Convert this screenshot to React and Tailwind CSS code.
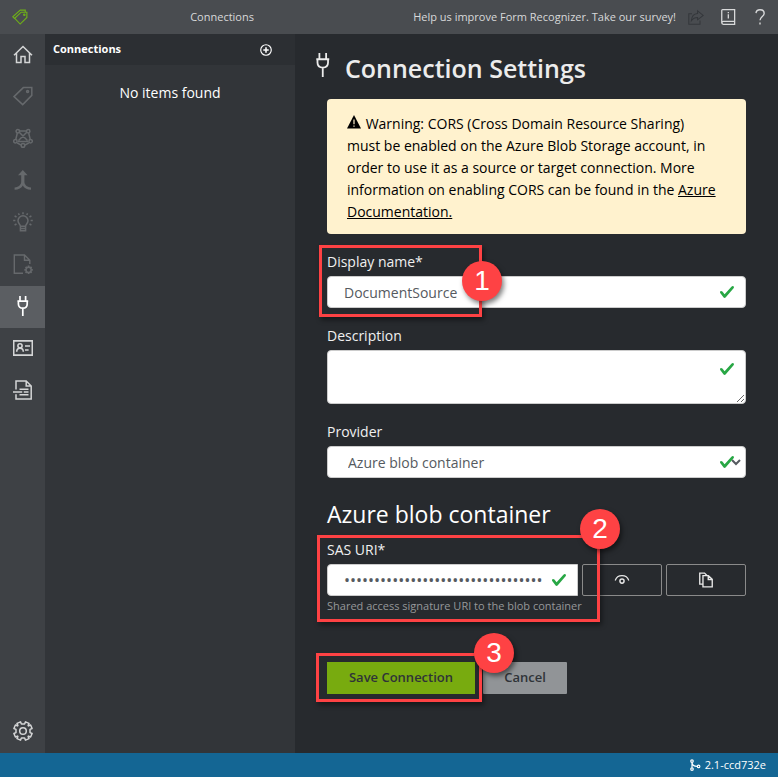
import { useState } from "react";

function Icon({ size = 20, stroke = 1.3, className = "", children }) {
  return (
    <svg
      aria-hidden="true"
      width={size}
      height={size}
      viewBox="0 0 20 20"
      fill="none"
      stroke="currentColor"
      strokeWidth={stroke}
      className={"block shrink-0 " + className}
    >
      {children}
    </svg>
  );
}

const TagsIcon = () => (
  <Icon size={16} stroke={1.4}>
    <path d="M3.6 12.2 1 9.8 10.3 1.4H16.6V3.6" />
    <path d="M3.4 11.6 11.5 4H18.6V10.6L10.2 18.8Z" />
    <circle cx="15.4" cy="7.2" r="0.9" />
  </Icon>
);

const HomeIcon = () => (
  <Icon stroke={1.5}>
    <path d="M1 11.2 10 2.5 19 11.2M3.5 9.2V18.5H8V12.5H12V18.5H16.5V9.2" />
  </Icon>
);

const TagIcon = () => (
  <Icon stroke={1.5}>
    <path d="M1 10.6 10.3 1.6H18.8V9.4L9.7 18.6Z" />
    <circle cx="14.6" cy="5.6" r="1" />
  </Icon>
);

const ModelIcon = () => (
  <Icon stroke={1.5}>
    <path d="M6 3H14M6 4 14.5 12.5M14 4 5.5 12.5M4.3 5 2.8 11.5M15.7 5 17.2 11.5M4.8 13.5H15.2M4 14.8 8 17M16 14.8 12 17" />
    <circle cx="4.8" cy="3.2" r="1.7" />
    <circle cx="15.2" cy="3.2" r="1.7" />
    <circle cx="2.4" cy="13.2" r="1.7" />
    <circle cx="17.6" cy="13.2" r="1.7" />
    <circle cx="10" cy="17.4" r="1.8" />
  </Icon>
);

const MergeIcon = () => (
  <Icon>
    <path
      d="M9.8 0 14.6 5.2H11.4V11.5C11.4 14.6 13.5 17 18 17.4V19.8C14 19.8 11 18 9.8 15.6C8.6 18 5.6 19.8 1.6 19.8V17.4C6.1 17 8.2 14.6 8.2 11.5V5.2H5Z"
      fill="currentColor"
      stroke="none"
    />
  </Icon>
);

const BulbIcon = () => (
  <Icon stroke={1.5}>
    <path d="M7.4 14.3C7.4 12.3 5 11.5 5 8.7A5 5 0 0 1 15 8.7C15 11.5 12.6 12.3 12.6 14.3ZM7.4 14.3V18.8H12.6V14.3M7.4 16.5H12.6" />
    <path d="M10 0.2V2.2M5.4 1.3 6.3 3M14.6 1.3 13.7 3M1.6 3.8 3.5 5M18.4 3.8 16.5 5M0.2 8.5H2.4M19.8 8.5H17.6M1.6 13 3.5 12M18.4 13 16.5 12" />
  </Icon>
);

const FileGearIcon = () => (
  <Icon stroke={1.4}>
    <path d="M10 19.2H1.3V1H11.5L16.8 6.3V10M11.5 1V6.3H16.8" />
    <circle cx="15.6" cy="15.8" r="2.6" strokeWidth="1.5" />
    <path
      d="M15.6 11.5V13M15.6 18.6V20M11.4 15.8H12.8M18.4 15.8H19.8M12.6 12.8 13.7 13.9M17.5 17.7 18.6 18.8M12.6 18.8 13.7 17.7M17.5 13.9 18.6 12.8"
      strokeWidth="1.8"
    />
  </Icon>
);

const PlugIcon = ({ size, stroke = 1.7 }) => (
  <Icon size={size} stroke={stroke}>
    <path d="M7 0V5M12.6 0V5M4.4 5.2H15.2M5.4 5.2V8C5.4 10.6 7.2 12.2 9.8 12.2S14.2 10.6 14.2 8V5.2M9.8 12V20" />
  </Icon>
);

const CardIcon = () => (
  <Icon stroke={1.6}>
    <path d="M0.7 2.9H19.3V17.1H0.7Z" />
    <circle cx="7" cy="7.8" r="2.1" />
    <path d="M3.7 13.8C3.7 11.4 5 10.2 7 10.2S10.3 11.4 10.3 13.8M12 8H17M12 12H15.6" />
  </Icon>
);

const FileLinesIcon = () => (
  <Icon stroke={1.5}>
    <path d="M3 9.5V1H13.2L18.2 6V19H3V14.3M13.2 1V6H18.2M6.5 9.2H15.5M0 12H9.2M10.8 12H15.5M6.5 14.8H15.5" />
  </Icon>
);

const GearIcon = () => (
  <Icon stroke={1.5}>
    <path
      strokeLinejoin="round"
      d="M8.4 3 7.5 0.9 4 2.4 4.9 4.5 4.5 4.9 2.4 4 0.9 7.5 3 8.4V11.6L0.9 12.5 2.4 16 4.5 15.1 4.9 15.5 4 17.6 7.5 19.1 8.4 17H11.6L12.5 19.1 16 17.6 15.1 15.5 15.5 15.1 17.6 16 19.1 12.5 17 11.6V8.4L19.1 7.5 17.6 4 15.5 4.9 15.1 4.5 16 2.4 12.5 0.9 11.6 3Z"
    />
    <circle cx="10" cy="10" r="3.3" />
  </Icon>
);

const ShareIcon = () => (
  <Icon size={16} stroke={1.3}>
    <path d="M5 6H1V19H15V14.5" />
    <path d="M12 2.3 19 8 12 13.5V10.5C8.5 10.5 6 11.8 4.2 14.5C4.6 9.5 7.5 5.8 12 5.5Z" />
  </Icon>
);

const BookIcon = () => (
  <Icon size={16} stroke={1.6}>
    <path d="M3.2 0.9H18.3V19.1H4.2C3 19.1 2.2 18.3 2.2 17.3V1.9C2.2 1.3 2.6 0.9 3.2 0.9ZM2.4 17C2.6 16.1 3.2 15.6 4.2 15.6H18.3" />
    <path d="M10.4 6.6V12M10.4 3.7V5.3" />
  </Icon>
);

const HelpIcon = () => (
  <Icon size={16} stroke={1.7}>
    <path d="M5 5.2C5.2 2.4 7.2 0.9 10 0.9C13 0.9 15.2 2.8 15.2 5.5C15.2 9 10 9.7 10 14.2M10 17V19.4" />
  </Icon>
);

const AddIcon = () => (
  <Icon size={12} stroke={1.9}>
    <circle cx="10" cy="10" r="8.8" />
    <path d="M10 5.5V14.5M5.5 10H14.5" strokeWidth="2.6" />
  </Icon>
);

const EyeIcon = () => (
  <Icon size={16} stroke={1.5}>
    <path d="M1.5 10.6C2.8 6.7 6 4.6 10 4.6S17.2 6.7 18.5 10.6" />
    <circle cx="10" cy="11.4" r="2.6" strokeWidth="1.8" />
  </Icon>
);

const CopyIcon = () => (
  <Icon size={16} stroke={1.7}>
    <path d="M6 15.2H2.2V1.4H8.2L11.2 4.4M6.2 4.6H13L17.8 9.2V18.6H6.2ZM12.8 4.6V9.4H17.8" />
  </Icon>
);

const BranchIcon = () => (
  <Icon size={12} stroke={2}>
    <circle cx="5" cy="3.4" r="2.1" />
    <circle cx="5" cy="16.8" r="2.1" />
    <circle cx="16" cy="12.4" r="2.1" />
    <path d="M5 5.5V14.7M5 6C5.5 10 8 12.4 13.8 12.4" />
  </Icon>
);

const WarningIcon = () => (
  <svg aria-hidden="true" width="14" height="14" viewBox="0 0 14 14" className="mr-px inline-block align-[0px]">
    <path d="M7 0 14 13.4H0Z" fill="#000" />
    <path d="M7 4.6V9.2M7 10.4V11.8" stroke="#fff2ce" strokeWidth="1.2" />
  </svg>
);

function ValidMark({ className }) {
  return (
    <svg
      aria-hidden="true"
      width="16"
      height="16"
      viewBox="0 0 8 8"
      className={"pointer-events-none absolute " + className}
    >
      <path
        fill="#28a745"
        d="M2.3 6.73.6 4.53c-.4-1.04.46-1.4 1.1-.8l1.1 1.4 3.4-3.8c.6-.63 1.6-.27 1.2.7l-4 4.6c-.43.5-.8.4-1.1.1z"
      />
    </svg>
  );
}

function Callout({ number, box, badge }) {
  return (
    <>
      <div
        className={
          "pointer-events-none absolute z-10 border-[3px] border-[#fe4244] shadow-[2px_3px_5px_rgba(0,0,0,0.45)] " + box
        }
      />
      <div
        className={
          "pointer-events-none absolute z-20 flex size-10 items-center justify-center rounded-full bg-[#fe4244] font-['Liberation_Sans',Arial,sans-serif] text-[28px] leading-none font-normal text-white shadow-[2px_3px_5px_rgba(0,0,0,0.5)] " +
          badge
        }
      >
        {number}
      </div>
    </>
  );
}

const navItems = [
  { label: "Home", Glyph: HomeIcon },
  { label: "Tags Editor", Glyph: TagIcon, disabled: true },
  { label: "Train", Glyph: ModelIcon, disabled: true },
  { label: "Model Compose", Glyph: MergeIcon, disabled: true },
  { label: "Analyze", Glyph: BulbIcon, disabled: true },
  { label: "Project Settings", Glyph: FileGearIcon, disabled: true },
  { label: "Connections", Glyph: PlugIcon, active: true },
  { label: "Prebuilt Analyze", Glyph: CardIcon },
  { label: "Layout Analyze", Glyph: FileLinesIcon },
];

const navItemStyle = "flex h-[42px] items-center justify-center pb-0.5 ";
const labelStyle = "block text-[14px] leading-5 mb-1 text-[#f0f0f0]";
const fieldStyle =
  "block w-full rounded-[4px] border border-[#cccccc] bg-white text-[14px] text-[#555a60] outline-none";
const iconButton =
  "flex h-8 w-20 shrink-0 items-center justify-center rounded-[2px] border border-[#8a8a8a] text-[#e8e8e8]";

export default function App() {
  const [name, setName] = useState("DocumentSource");
  const [sas, setSas] = useState("https://documentsource.blob.core.windows.net/forms?sv=2019");

  return (
    <div className="flex min-h-screen flex-col bg-[#272a2e] font-['Open_Sans','Noto_Sans',sans-serif] text-white">
      <header className="flex h-[34px] items-center bg-[#494c50] text-[11px] text-[#d8d9da]">
        <div className="flex w-[45px] shrink-0 pl-3 text-[#6fb018]">
          <TagsIcon />
        </div>
        <div className="flex-1 pr-3.5 text-center">Connections</div>
        <div className="flex items-center">
          <a href="#survey">Help us improve Form Recognizer. Take our survey!</a>
          <button type="button" aria-label="Share" disabled className="ml-3 text-[#34373b]">
            <ShareIcon />
          </button>
          <button type="button" aria-label="Documentation" className="ml-4">
            <BookIcon />
          </button>
          <button type="button" aria-label="Help" className="mr-[10px] ml-4">
            <HelpIcon />
          </button>
        </div>
      </header>

      <div className="flex flex-1">
        <nav className="flex w-[45px] shrink-0 flex-col justify-between bg-[#3e4145]">
          <div>
            {navItems.map(({ label, Glyph, disabled, active }) => (
              <a
                key={label}
                href="#nav"
                aria-label={label}
                className={
                  navItemStyle + (active ? "bg-[#5b5e62] text-white" : disabled ? "text-[#66696c]" : "text-[#d4d5d6]")
                }
              >
                <Glyph />
              </a>
            ))}
          </div>
          <a href="#settings" aria-label="Settings" className={navItemStyle + "text-[#d4d5d6]"}>
            <GearIcon />
          </a>
        </nav>

        <aside className="w-[250px] shrink-0 bg-[#323539]">
          <div className="flex h-[31px] items-center justify-between bg-[#2c2f33] pr-[23px] pl-2">
            <h2 className="text-[11px] font-bold">Connections</h2>
            <button type="button" aria-label="New connection">
              <AddIcon />
            </button>
          </div>
          <p className="mt-4 text-center text-[14px] leading-6">No items found</p>
        </aside>

        <main className="min-w-0 flex-1 px-8 pt-[18px]">
          <h1 className="-ml-4 flex h-8 items-center text-[25px] leading-8 font-semibold text-[#ececec]">
            <span className="mr-[10px] mb-1.5">
              <PlugIcon size={24} stroke={1.5} />
            </span>
            Connection Settings
          </h1>

          <div className="mt-[15px] rounded-[4px] bg-[#fff2ce] px-5 pt-[14px] pb-[11px] text-[14px] leading-[22px] text-black">
            <WarningIcon /> Warning: CORS (Cross Domain Resource Sharing)
            <br />
            must be enabled on the Azure Blob Storage account, in order to use it as a source or target connection. More
            information on enabling CORS can be found in the{" "}
            <a href="#azure" className="underline">
              Azure Documentation.
            </a>
          </div>

          <form className="mt-[18px]" onSubmit={(e) => e.preventDefault()}>
            <div className="flex flex-col gap-[18px]">
              <div className="relative">
                <label htmlFor="name" className={labelStyle}>
                  Display name*
                </label>
                <div className="relative">
                  <input
                    id="name"
                    value={name}
                    onChange={(e) => setName(e.target.value)}
                    className={fieldStyle + " h-8 px-4"}
                  />
                  <ValidMark className="top-2 right-[11px]" />
                </div>
                <Callout number={1} box="-top-[7px] -left-2 h-[72px] w-[163px]" badge="top-[9px] left-[135px]" />
              </div>

              <div>
                <label htmlFor="description" className={labelStyle}>
                  Description
                </label>
                <div className="relative">
                  <textarea id="description" className={fieldStyle + " h-[54px] px-4 py-1"} />
                  <ValidMark className="top-[11px] right-[11px]" />
                </div>
              </div>

              <div>
                <label htmlFor="provider" className={labelStyle}>
                  Provider
                </label>
                <div className="relative">
                  <select id="provider" className={fieldStyle + " h-8 appearance-none px-5"}>
                    <option>Azure blob container</option>
                  </select>
                  <svg
                    aria-hidden="true"
                    width="10"
                    height="7"
                    viewBox="0 0 10 7"
                    fill="none"
                    className="pointer-events-none absolute top-[13px] right-[5px]"
                  >
                    <path d="M1 1 5 5 9 1" stroke="#555a60" strokeWidth="2" />
                  </svg>
                  <ValidMark className="top-2 right-[11px]" />
                </div>
              </div>
            </div>

            <h2 className="mt-5 mb-[10px] text-[23px] leading-8">Azure blob container</h2>

            <div className="relative">
              <label htmlFor="sas" className={labelStyle}>
                SAS URI*
              </label>
              <div className="flex gap-1">
                <div className="relative flex-1">
                  <input
                    id="sas"
                    type="password"
                    autoComplete="off"
                    value={sas}
                    onChange={(e) => setSas(e.target.value)}
                    className="block h-8 w-full rounded-l-[4px] border border-[#cccccc] bg-white pr-[35px] pl-4 text-[16px] text-[#555a60] outline-none"
                  />
                  <ValidMark className="top-2 right-[11px]" />
                </div>
                <button type="button" aria-label="Show or hide" className={iconButton}>
                  <EyeIcon />
                </button>
                <button type="button" aria-label="Copy" className={iconButton}>
                  <CopyIcon />
                </button>
              </div>
              <p className="mt-[2px] text-[11px] leading-4 text-[#96989a]">
                Shared access signature URI to the blob container
              </p>
              <Callout number={2} box="-top-[5px] -left-[10px] h-[87px] w-[283px]" badge="-top-[31px] left-[253px]" />
            </div>

            <div className="relative mt-12 flex gap-2 text-[13px] font-semibold text-[#2f3338]">
              <button type="submit" className="h-8 w-[148px] bg-[#78ab0f]">
                Save Connection
              </button>
              <button type="button" className="h-8 w-[84px] rounded-[1px] bg-[#919497]">
                Cancel
              </button>
              <Callout number={3} box="-top-[9px] -left-[11px] h-[49px] w-[166px]" badge="-top-[29px] left-[147px]" />
            </div>
          </form>
        </main>
      </div>

      <footer className="flex h-6 items-center justify-end gap-1 bg-[#146694] pr-3 text-[11px]">
        <BranchIcon />
        <span>2.1-ccd732e</span>
      </footer>
    </div>
  );
}
